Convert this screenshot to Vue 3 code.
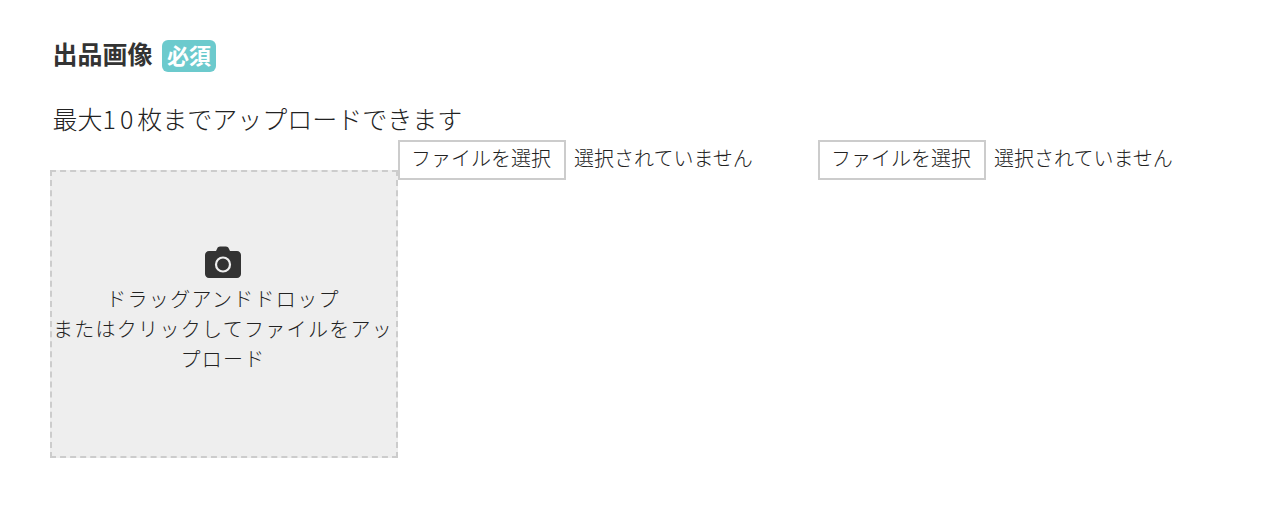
<script setup>
const inputs = [1, 2]
</script>

<template>
  <main class="page">
    <h2 class="title">出品画像<span class="badge">必須</span></h2>
    <p class="desc">最大<span class="num">10</span>枚までアップロードできます</p>
    <div class="row">
      <div class="drop">
        <svg class="cam" viewBox="0 0 36 32" width="36" height="32" aria-hidden="true">
          <path fill-rule="evenodd" fill="#333" d="M4 5h7l1.2-2.6C12.800 1.200 13.800.5 15 .5h6c1.200 0 2.200.7 2.800 1.900L25 5h7c2.200 0 4 1.800 4 4v19c0 2.200-1.800 4-4 4H4c-2.200 0-4-1.800-4-4V9c0-2.200 1.800-4 4-4Z"/>
          <circle cx="18" cy="18.500" r="7" fill="none" stroke="#eee" stroke-width="2.200"/>
        </svg>
        <p class="drop-text">ドラッグアンドドロップ<br>またはクリックしてファイルをアップロード</p>
      </div>
      <div v-for="i in inputs" :key="i" class="file">
        <button class="pick" type="button">ファイルを選択</button>
        <span class="none">選択されていません</span>
      </div>
    </div>
  </main>
</template>

<style scoped>
.page {
  padding: 40px 0 0 50px;
  font-family: "Noto Sans CJK JP", sans-serif;
  font-weight: 300;
  color: #222;
}
.title {
  display: flex;
  align-items: flex-start;
  margin: 0 0 0 2.500px;
  height: 32px;
  font-size: 25px;
  font-weight: 700;
  line-height: 26px;
  color: #333;
}
.badge {
  box-sizing: border-box;
  width: 54px;
  margin-left: 9.500px;
  height: 32px;
  border-radius: 6px;
  background: #6ccacd;
  color: #fff;
  font-size: 22px;
  line-height: 28px;
  text-align: center;
}
.desc {
  margin: 32px 0 0 2.500px;
  height: 36px;
  font-size: 25px;
  line-height: 29px;
}
.num {
  letter-spacing: 4px;
}
.row {
  display: flex;
  align-items: flex-start;
}
.drop {
  box-sizing: border-box;
  width: 348px;
  height: 288px;
  margin-top: 30px;
  padding: 74px 2px 0 0;
  border: 2px dashed #ccc;
  background: #eee;
  text-align: center;
}
.cam {
  display: block;
  margin: 0 auto;
}
.drop-text {
  margin: 6px 0 0;
  font-size: 20px;
  line-height: 30px;
  letter-spacing: 1.300px;
}
.file {
  display: flex;
  align-items: center;
  width: 420px;
  height: 40px;
}
.pick {
  box-sizing: border-box;
  width: 168px;
  height: 40px;
  padding: 0 2px 6px 0;
  border: 2px solid #ccc;
  background: #fff;
  color: #222;
  font: inherit;
  font-size: 20px;
}
.none {
  margin: 0 0 6px 8px;
  font-size: 20px;
}
</style>
